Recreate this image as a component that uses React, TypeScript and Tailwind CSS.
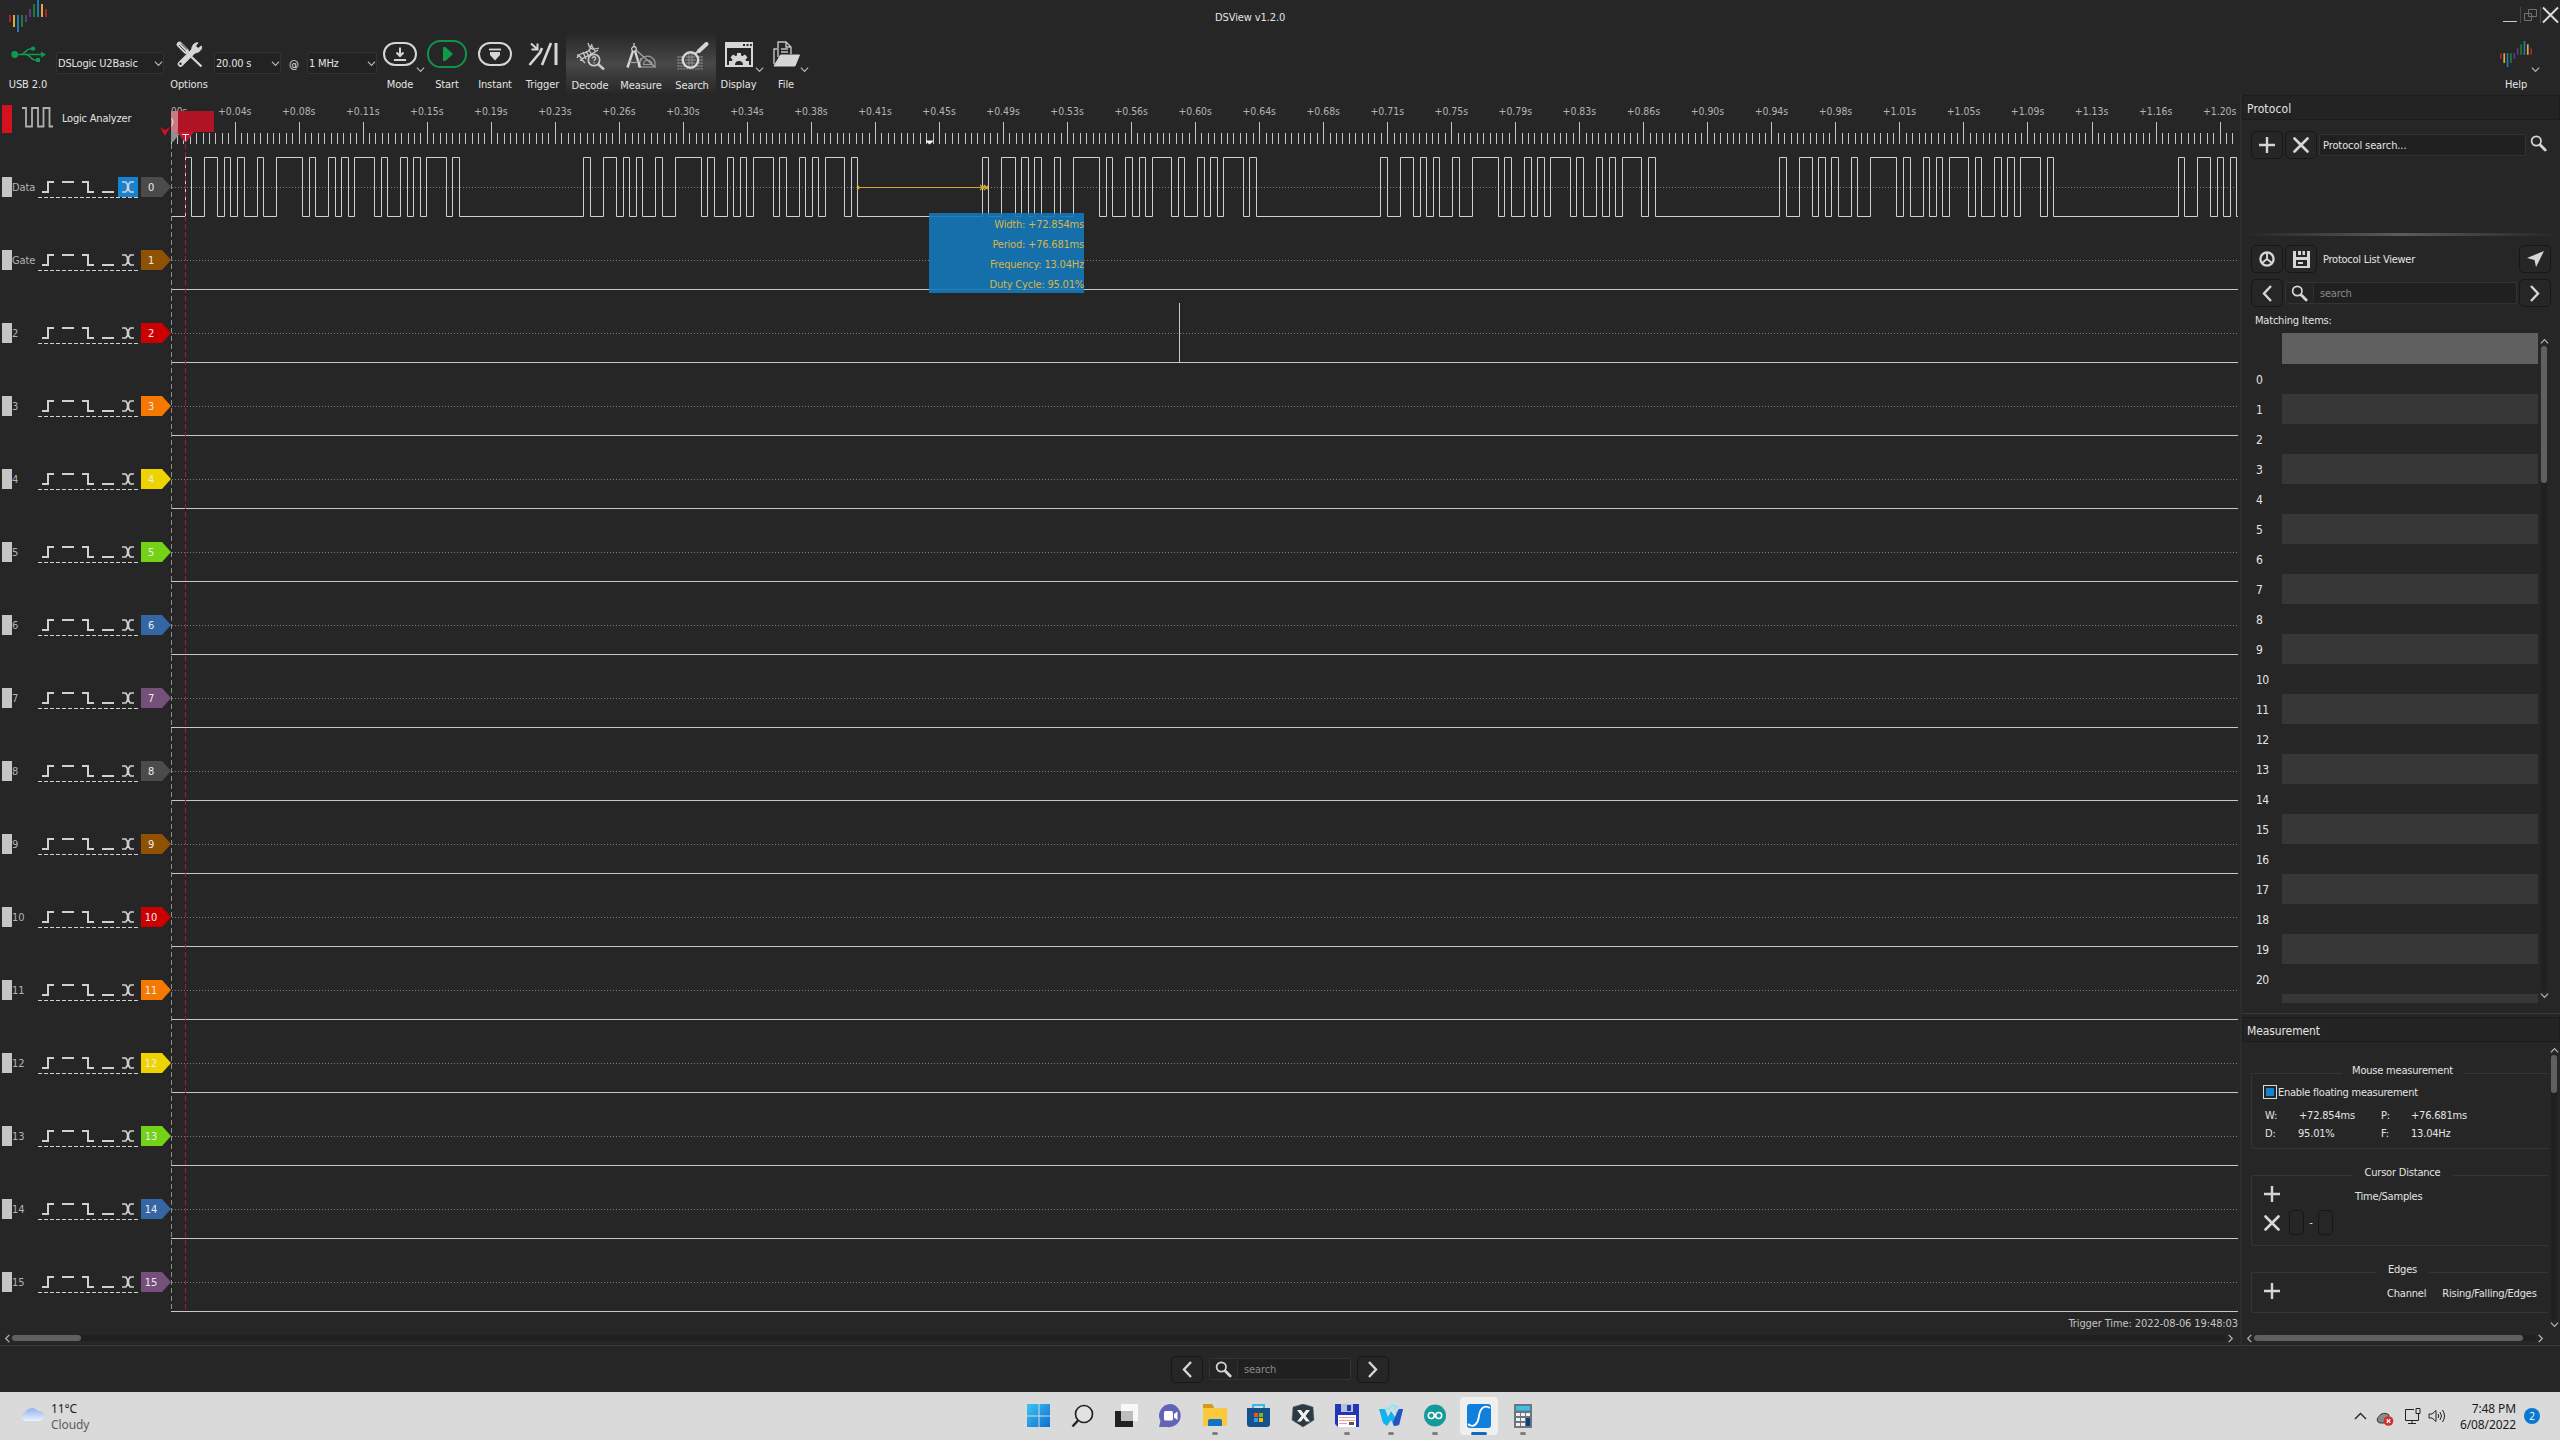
import React from "react";

const HIGH = 157.5;
const LOW = 216.5;
const EDGES = [0, 1, 3, 5, 6, 7, 8, 9, 11, 12, 14, 18, 19, 20, 22, 23, 24, 25, 26, 29, 30, 31, 33, 34, 35, 36, 37, 40, 41, 42];
const TAGS = ["#4b4b4b", "#8f5202", "#cc0000", "#f57900", "#edd400", "#73d216", "#3465a4", "#75507b"];

/* ---------- small drawings ---------- */

function Chevron({ dir, size = 9, color = "#b9b9b9", sw = 1.3 }: { dir: "up" | "down" | "left" | "right"; size?: number; color?: string; sw?: number }) {
  const d = { up: "M1 7 5 3 9 7", down: "M1 3 5 7 9 3", left: "M7 1 3 5 7 9", right: "M3 1 7 5 3 9" }[dir];
  return (
    <svg width={size} height={size} viewBox="0 0 10 10" fill="none" stroke={color} strokeWidth={sw} className="block shrink-0">
      <path d={d} />
    </svg>
  );
}

function BarsLogo({ w, h }: { w: number; h: number }) {
  const bars: [number, number, number, string][] = [
    [0, 15, 7, "#b0202a"], [4, 15, 12, "#dcaa3c"], [8, 15, 17, "#2277b8"], [12, 15, 12, "#1f7a35"], [16, 15, 7, "#5c3a80"],
    [20, 9, 8, "#5c3a80"], [24, 4, 13, "#1f7a35"], [28, 0, 17, "#2277b8"], [32, 4, 13, "#dcaa3c"], [36, 9, 8, "#b0202a"],
  ];
  return (
    <svg width={w} height={h} viewBox="0 0 38 32" preserveAspectRatio="none" className="block">
      {bars.map(([x, y, bh, c]) => (
        <rect key={x} x={x} y={y} width="2" height={bh} fill={c} />
      ))}
    </svg>
  );
}

function Magnifier({ size = 17 }: { size?: number }) {
  return (
    <svg width={size} height={size} viewBox="0 0 17 17" fill="none" stroke="#d6d6d6" className="block shrink-0">
      <circle cx="6.3" cy="6" r="4.7" strokeWidth="1.7" />
      <path d="M10 9.8 15.2 15" strokeWidth="2.8" strokeLinecap="round" />
    </svg>
  );
}

function Plus() {
  return (
    <svg width="16" height="16" viewBox="0 0 16 16" stroke="#d6d6d6" strokeWidth="2.4" className="block shrink-0">
      <path d="M8 0V16M0 8H16" />
    </svg>
  );
}

function Cross({ size = 16 }: { size?: number }) {
  return (
    <svg width={size} height={size} viewBox="0 0 16 16" stroke="#d6d6d6" strokeWidth="2.6" strokeLinecap="round" className="block shrink-0">
      <path d="M1.5 1.5 14.5 14.5M14.5 1.5 1.5 14.5" />
    </svg>
  );
}

function Arrow({ dir }: { dir: "left" | "right" }) {
  return (
    <svg width="12" height="17" viewBox="0 0 12 17" fill="none" stroke="#d6d6d6" strokeWidth="2.4" className="block">
      <path d={dir === "left" ? "M10 1 3 8.500 10 16" : "M2 1 9 8.500 2 16"} />
    </svg>
  );
}

const icons = {
  usb: (
    <svg width="35" height="17" viewBox="0 0 35 17" fill="none" stroke="#0f9a4e" strokeWidth="1.7">
      <path d="M4 8.500H31M10 8.500C15 8 14 3 19 3H21M15 8.500C20 9 19 14 24 14H26" />
      <circle cx="3.700" cy="8.500" r="3.400" fill="#0f9a4e" stroke="none" />
      <circle cx="22" cy="2.600" r="2.200" fill="#0f9a4e" stroke="none" />
      <rect x="25" y="12" width="4" height="4" fill="#0f9a4e" stroke="none" />
      <path d="M30 5.500 35 8.500 30 11.500Z" fill="#0f9a4e" stroke="none" />
    </svg>
  ),
  options: (
    <svg width="27" height="27" viewBox="0 0 27 27" fill="none" stroke="#d6d6d6">
      <path d="M3.500 3.500 10 10" strokeWidth="5.500" strokeLinecap="round" />
      <path d="M3 4 9.500 10.500M5 2.500 11 8.500" strokeWidth="0.9" stroke="#262626" />
      <path d="M15 15.500 25.500 25.500" strokeWidth="2.400" />
      <path d="M4.500 23 19 8.500" strokeWidth="5.500" strokeLinecap="round" />
      <path d="M16 10.500C15 6 17.500 1.500 22 1.800L19.500 5 22 7.500 25.500 5C26.500 9.500 21 13 17 11.500Z" fill="#d6d6d6" />
      <circle cx="4.500" cy="22.800" r="1.200" fill="#262626" stroke="none" />
    </svg>
  ),
  mode: (
    <svg width="34" height="24" viewBox="0 0 34 24" fill="none" stroke="#d6d6d6" strokeWidth="2">
      <rect x="1" y="1" width="32" height="22" rx="11" />
      <path d="M17 5.500V14M13.500 10.500 17 14 20.500 10.500M11 18H23" />
    </svg>
  ),
  start: (
    <svg width="40" height="28" viewBox="0 0 40 28" fill="none" stroke="#12934a" strokeWidth="2">
      <rect x="1" y="1" width="38" height="26" rx="12.500" />
      <path d="M16.500 7.500H18.500L25.500 14 18.500 20.500H16.500Z" fill="#0e9a48" stroke="#0e9a48" strokeWidth="1" />
    </svg>
  ),
  instant: (
    <svg width="34" height="24" viewBox="0 0 34 24" fill="none" stroke="#d6d6d6" strokeWidth="2">
      <rect x="1" y="1" width="32" height="22" rx="11" />
      <path d="M11 7.500H23" strokeWidth="1.800" />
      <path d="M12 10H22V13L17 18.500 12 13Z" fill="#d6d6d6" stroke="none" />
    </svg>
  ),
  trigger: (
    <svg width="30" height="24" viewBox="0 0 30 24" fill="none" stroke="#d6d6d6">
      <path d="M1.500 23 12 10.500 14 6M14 23 23 1" strokeWidth="2.600" />
      <path d="M28 1V23" strokeWidth="3" />
      <path d="M3 1.500 9 7M9.500 1.500V7.500H3.500" strokeWidth="2" />
    </svg>
  ),
  decode: (
    <svg width="29" height="28" viewBox="0 0 29 28" fill="none" stroke="#c8c8c8" strokeWidth="1.300">
      <path d="M1 16C5 7 12 16 16 2M4 18.500C9 14 14 14 22 8M12 1C14 8 17 8 23 6M1 13C5 13 6 19 9 21M7 10 10 17M10 9 13 15M13 8 16 13M16 4 19 9" />
      <circle cx="18" cy="18" r="5.700" strokeWidth="1.700" fill="#484848" />
      <path d="M22 22 28 27.500" strokeWidth="2.600" />
      <path d="M16.300 16.500C16.300 14 20 14.300 19.700 16.500 19.500 17.800 18 17.600 18 19M18 20.300V21.400" />
    </svg>
  ),
  measure: (
    <svg width="30" height="28" viewBox="0 0 30 28" fill="none" stroke="#a8a8a8" strokeWidth="1.200">
      <path d="M10 8 29 25H13" />
      <path d="M12 25 15 16M14 25A7.500 8 0 0 1 29 20V25M17.500 22.500A4 4 0 0 1 26 22.500Z" stroke="#9c9c9c" />
      <path d="M8 1V5" stroke="#d6d6d6" />
      <circle cx="8" cy="7" r="2.300" stroke="#d6d6d6" />
      <path d="M7 9 1.500 25.500M9 9 14 25.500" stroke="#d6d6d6" strokeWidth="2.400" />
      <path d="M3 19C6 21 10 21 13 19" />
    </svg>
  ),
  search: (
    <svg width="33" height="28" viewBox="0 0 33 28" fill="none">
      <path d="M1 15H27M1 18H27M1 21H27M1 24H27M3 14V27M6 14V27M9 14V27M22 14V27M25 14V27M1 27H27" stroke="#8b8b8b" strokeWidth="0.900" strokeDasharray="2 1" />
      <circle cx="14.500" cy="18" r="7.700" stroke="#d6d6d6" strokeWidth="2.400" fill="#4a4a4a" />
      <path d="M10 15H19M9 18H20M10 21H19M13 12V24M16 12V24" stroke="#9a9a9a" strokeWidth="0.900" />
      <path d="M19.500 11.500 23 8.500" stroke="#d6d6d6" strokeWidth="2" />
      <path d="M23 9 30.500 2" stroke="#d6d6d6" strokeWidth="4" strokeLinecap="round" />
    </svg>
  ),
  display: (
    <svg width="28" height="25" viewBox="0 0 28 25">
      <path d="M0 0H28V25H0ZM2 6V23H26V6Z" fill="#d6d6d6" fillRule="evenodd" />
      <path d="M18 2H20V4H18ZM21.500 2H23.500V4H21.500ZM25 2H26.800V4H25Z" fill="#262626" />
      <path d="M4 23V19H7L7.500 17.500 5.500 15.500 8 12.500 10.500 14 12 13.500V11H16V13.500L17.500 14 20 12.500 22.500 15.500 20.500 17.500 21 19H24V23H18A4 4 0 0 0 10 23Z" fill="#d6d6d6" />
    </svg>
  ),
  file: (
    <svg width="27" height="26" viewBox="0 0 27 26" fill="none" stroke="#c4c4c4" strokeWidth="1.400">
      <path d="M5 16V1H13L18 6V13M13 1V6H18M8 8H15M8 11H15M1 23V8H4" />
      <path d="M1 25 7.500 14H26.500L22 25Z" fill="#d6d6d6" stroke="#d6d6d6" strokeWidth="1" />
    </svg>
  ),
};

/* ---------- toolbar ---------- */

function Tool({ icon, label, width, menu, lit }: { icon: React.ReactNode; label: string; width: string; menu?: boolean; lit?: boolean }) {
  return (
    <div className={`relative flex shrink-0 flex-col items-center ${width} ${lit ? "pt-0.5" : ""}`}>
      <div className="flex h-11 items-center">{icon}</div>
      <div className="h-[18px] text-center leading-[18px]">{label}</div>
      {menu && (
        <div className="absolute top-[33px] left-[39px]">
          <Chevron dir="down" />
        </div>
      )}
    </div>
  );
}

function Combo({ text, width }: { text: string; width: string }) {
  return (
    <div className={`mt-5 flex h-[22px] shrink-0 items-center justify-between rounded-[2px] border border-[#333333] bg-[#222222] pl-px ${width}`}>
      <span className="pt-0.5 tracking-[-0.2px]">{text}</span>
      <Chevron dir="down" />
    </div>
  );
}

function Toolbar() {
  return (
    <div className="flex h-[63px] items-start">
      <Tool icon={icons.usb} label="USB 2.0" width="w-[56px]" />
      <Combo text="DSLogic U2Basic" width="w-[108px]" />
      <Tool icon={icons.options} label="Options" width="w-[50px]" />
      <Combo text="20.00 s" width="w-[67px]" />
      <div className="w-[26px] pt-[25px] text-center leading-4">@</div>
      <Combo text="1 MHz" width="w-[70px]" />
      <Tool icon={icons.mode} label="Mode" width="w-[46px]" menu />
      <Tool icon={icons.start} label="Start" width="w-[48px]" />
      <Tool icon={icons.instant} label="Instant" width="w-[48px]" />
      <Tool icon={icons.trigger} label="Trigger" width="w-[47px]" />
      <div className="flex h-[63px] bg-gradient-to-b from-[#262626] via-[#484848] to-[#262626]">
        <Tool icon={icons.decode} label="Decode" width="w-[48px]" lit />
        <Tool icon={icons.measure} label="Measure" width="w-[54px]" lit />
        <Tool icon={icons.search} label="Search" width="w-[48px]" lit />
      </div>
      <Tool icon={icons.display} label="Display" width="w-[45px]" menu />
      <Tool icon={icons.file} label="File" width="w-[50px]" menu />
      <div className="mr-5 ml-auto">
        <Tool icon={<BarsLogo w={32} h={26} />} label="Help" width="w-12" menu />
      </div>
    </div>
  );
}

function TitleBar() {
  return (
    <div className="flex h-8 items-start">
      <div className="w-[1215px] pl-[9px]">
        <BarsLogo w={38} h={32} />
      </div>
      <div className="mt-[10px] w-[70px] text-center leading-4 whitespace-nowrap">DSView v1.2.0</div>
      <svg width="60" height="24" viewBox="0 0 60 24" fill="none" className="ml-auto">
        <path d="M3 21.500H17" stroke="#c9c9c9" />
        <path d="M20.500 7V23M40.500 7V23" stroke="#484848" />
        <path d="M24.500 13.500H31.500V20.500H24.500ZM28.500 9.500H36.500V16.500H28.500Z" stroke="#707070" />
        <path d="M43 7.500 58 22.500M58 7.500 43 22.500" stroke="#dcdcdc" strokeWidth="2" />
      </svg>
    </div>
  );
}

/* ---------- channel list and wave view ---------- */

function Channel({ n }: { n: number }) {
  const name = n === 0 ? "Data" : n === 1 ? "Gate" : String(n);
  return (
    <div className="flex h-[73px] items-start pt-[26px] pl-[2px]">
      <div className="h-5 w-[10px] shrink-0 bg-[#c5c5c5]" />
      <div className="w-[26px] shrink-0 leading-[22px] text-[#b4b4b4]">{name}</div>
      <svg width="100" height="21" viewBox="0 0 100 21" fill="none" stroke="#d0d0d0" strokeWidth="2" className="shrink-0">
        {n === 0 && <rect x="80" y="0" width="20" height="20" fill="#1583d0" stroke="none" />}
        <path d="M4 15H10V5H16M24 5H36M44 5H50V15H56M64 15H76" />
        <path d="M84 5H88.500M91.500 5H96M84 15H88.500M91.500 15H96M88 5.500 89.500 7.500V12.500L88 14.500M92 5.500 90.500 7.500V12.500L92 14.500" strokeWidth="1.700" />
        <path d="M0 20.500H100" strokeWidth="1" strokeDasharray="4 2" />
      </svg>
      <div className="relative ml-[3px] h-5 w-[30px] shrink-0">
        <svg width="30" height="20" viewBox="0 0 30 20" className="absolute inset-0">
          <path d="M0 0H21L30 10 21 20H0Z" fill={TAGS[n % 8]} />
        </svg>
        <div className="relative w-[20px] text-center leading-[22px] text-[#ececec]">{n}</div>
      </div>
    </div>
  );
}

function wavePath() {
  let d = `M171 ${LOW}`;
  for (let b = 0; b < 6; b++) {
    for (let i = 0; i < EDGES.length; i++) {
      const x = Math.floor(185.3 + 398.55 * b + 6.525 * EDGES[i]) + 0.5;
      if (x > 2238) return d + "H2238";
      d += `H${x}V${i % 2 === 0 ? HIGH : LOW}`;
    }
  }
  return d;
}

function WaveView() {
  const majors = Array.from({ length: 33 }, (_, n) => n);
  let ticks = "";
  for (let i = 0; i <= 322; i++) {
    const x = Math.floor(171.1 + 6.403 * i) + 0.5;
    ticks += `M${x} ${i % 10 === 0 && i > 0 ? 122 : 133}V144`;
  }
  return (
    <div className="relative">
      <svg width="2069" height="1223" viewBox="171 96 2069 1223" fill="none" className="block">
        {majors.map((n) => (
          <text key={n} x={n === 0 ? 179 : 170.7 + 64.03 * n} y="115" textAnchor="middle" textLength={n === 0 ? 16 : 33.500} lengthAdjust="spacingAndGlyphs" fill="#b4b4b4" className="text-[11px] tracking-normal">
            {n === 0 ? "00s" : `+${(Math.round(3.75 * n) / 100).toFixed(2)}s`}
          </text>
        ))}
        <path d={ticks} stroke="#c5c5c5" />
        {Array.from({ length: 16 }, (_, n) => (
          <path key={n} d={`M172 ${187.5 + 73 * n}H2239`} stroke="#7c7c7c" strokeDasharray="1 2" />
        ))}
        {Array.from({ length: 15 }, (_, n) => (
          <path key={n} d={`M171 ${289.5 + 73 * n}H2238`} stroke="#c8c8c8" />
        ))}
        <path d="M1179.500 303V362" stroke="#c8c8c8" />
        <path d={wavePath()} stroke="#d0d0d0" />
        <path d="M171.500 144V1311" stroke="#8c8c8c" strokeDasharray="5 3" />
        <path d="M185.500 144V1311" stroke="#a81c2c" strokeDasharray="5 3" />
        <rect x="171" y="111" width="43" height="21" fill="#af1324" />
        <rect x="171" y="111" width="7" height="21" fill="#c77a82" />
        <path d="M171 132H181L173 142H171Z" fill="#8f8f8f" />
        <path d="M177 132H194L185.500 143Z" fill="#c11a2e" />
        <path d="M182 134.500H189M185.500 134V141" stroke="#f0f0f0" />
        <path d="M171 118C173.500 119 173.500 125 171 126" stroke="#f0f0f0" />
        <path d="M926 140.500H933V141.500L929.500 144.500 926 141.500Z" fill="#f2f2f2" />
        <path d="M857 187.500H988" stroke="#d4a536" />
        <path d="M857 185l2.500 2.500-2.500 2.500M980 185l5 5M985 185l-5 5M984.500 185l4 5M988.500 185l-4 5" stroke="#d4a536" strokeWidth="1.200" />
      </svg>
      <div className="absolute top-[117px] left-[758px] h-20 w-[155px] bg-[#1478ba]/90 pt-[2px] text-right leading-5 tracking-[-0.2px] text-[#d8b548]">
        <div className="h-5">Width: +72.854ms</div>
        <div className="h-5">Period: +76.681ms</div>
        <div className="h-5">Frequency: 13.04Hz</div>
        <div className="h-5">Duty Cycle: 95.01%</div>
      </div>
    </div>
  );
}

function LogicPane() {
  return (
    <div className="flex w-[2240px] shrink-0 flex-col">
      <div className="flex h-[1224px] pt-px">
        <div className="w-[171px] shrink-0">
          <div className="flex h-[55px] items-start pt-[9px] pl-[2px]">
            <div className="h-7 w-[10px] bg-[#d3111f]" />
            <svg width="32" height="21" viewBox="0 0 32 21" fill="none" stroke="#b0b0b0" strokeWidth="1.800" className="mt-[2px] ml-[10px]">
              <path d="M0 1H4V19.500H10V1H16V19.500H21.500V1H27.500V19.500H31" />
            </svg>
            <span className="mt-[6px] ml-2 leading-4 tracking-[-0.2px] whitespace-nowrap">Logic Analyzer</span>
            <svg width="10" height="9" viewBox="0 0 10 9" className="mt-[22px] mr-[1px] ml-auto">
              <path d="M0 0 5 3 10 0 5 9Z" fill="#d3111f" />
            </svg>
          </div>
          {Array.from({ length: 16 }, (_, n) => (
            <Channel key={n} n={n} />
          ))}
        </div>
        <WaveView />
      </div>
      <div className="h-3 pr-[2px] text-right leading-[9px] text-[#c4c4c4]">Trigger Time: 2022-08-06 19:48:03</div>
      <div className="flex h-[14px] items-center pr-[5px] pl-[3px]">
        <Chevron dir="left" />
        <div className="h-[6px] grow bg-[#202020]">
          <div className="h-[6px] w-[69px] rounded-full bg-[#606060]" />
        </div>
        <Chevron dir="right" />
      </div>
    </div>
  );
}

/* ---------- right dock ---------- */

function IconButton({ children, className = "h-7" }: { children: React.ReactNode; className?: string }) {
  return <div className={`flex w-8 shrink-0 items-center justify-center rounded-[5px] border border-[#171717] ${className}`}>{children}</div>;
}

function SearchField({ width, icon }: { width: string; icon: string }) {
  return (
    <div className={`flex h-[22px] shrink-0 items-center rounded-[2px] border border-[#333333] bg-[#202020] ${width}`}>
      <div className={`flex h-5 items-center justify-center rounded-[3px] border-r border-[#303030] bg-[#242424] ${icon}`}>
        <Magnifier />
      </div>
      <span className="pt-0.5 pl-[6px] text-[#8a8a8a]">search</span>
    </div>
  );
}

function Group({ title, gap, height, children }: { title: string; gap: string; height: string; children: React.ReactNode }) {
  return (
    <div className={`relative w-[297px] rounded-l-[2px] border border-r-0 border-[#353535] ${height}`}>
      <div className="absolute inset-x-0 -top-[11px] flex justify-center pl-[5px]">
        <div className={`bg-[#262626] text-center leading-4 ${gap}`}>{title}</div>
      </div>
      {children}
    </div>
  );
}

function Dock() {
  return (
    <div className="w-[318px] shrink-0 tracking-[-0.2px]">
      <div className="flex h-[25px] items-center border border-[#1c1c1c] bg-[#232323] pt-0.5 pl-1 text-[12px] tracking-[0.1px]">Protocol</div>
      <div className="mt-[11px] flex h-7 items-center pl-[9px]">
        <IconButton><Plus /></IconButton>
        <div className="w-[2px]" />
        <IconButton><Cross /></IconButton>
        <div className="ml-[2px] flex h-[22px] w-[207px] items-center rounded-[2px] border border-[#333333] bg-[#202020] pt-0.5 pl-[3px] tracking-[-0.1px]">Protocol search...</div>
        <div className="mb-1 ml-[4px]"><Magnifier /></div>
      </div>
      <div className="mt-[74px] h-[3px] bg-gradient-to-r from-[#262626] via-[#5c5c5c] to-[#262626]" />
      <div className="mt-[9px] flex h-7 items-center pl-[9px]">
        <IconButton>
          <svg width="16" height="16" viewBox="0 0 16 16" fill="none" stroke="#d6d6d6" strokeWidth="2.300">
            <circle cx="8" cy="8" r="6.600" />
            <path d="M8 1V8M8 8 3 12M8 8 13 12" strokeWidth="1.900" />
          </svg>
        </IconButton>
        <div className="w-[2px]" />
        <IconButton>
          <svg width="17" height="17" viewBox="0 0 17 17">
            <path d="M0 0H3V6H14V0H17V17H0ZM5 0H8V4H5ZM9.500 0H12V4H9.500Z" fill="#d6d6d6" />
            <path d="M3 9H14V15H3ZM5 11V13H10V11Z" fill="#262626" fillRule="evenodd" />
          </svg>
        </IconButton>
        <span className="ml-[6px] pt-0.5 tracking-[-0.25px]">Protocol List Viewer</span>
        <div className="mr-[9px] ml-auto">
          <IconButton>
            <svg width="17" height="16" viewBox="0 0 17 16">
              <path d="M17 0 9 16 7.500 9 0 7Z" fill="#d6d6d6" />
            </svg>
          </IconButton>
        </div>
      </div>
      <div className="mt-[6px] flex h-7 items-center pl-[9px]">
        <IconButton><Arrow dir="left" /></IconButton>
        <div className="w-[2px]" />
        <SearchField width="w-[232px]" icon="w-7" />
        <div className="w-[2px]" />
        <IconButton><Arrow dir="right" /></IconButton>
      </div>
      <div className="mt-[6px] pl-[13px] leading-4">Matching Items:</div>
      <div className="mt-[4px] flex h-[670px] overflow-hidden">
        <div className="w-[296px] shrink-0">
          <div className="ml-10 h-[31px] bg-[#606060]" />
          {Array.from({ length: 22 }, (_, n) => (
            <div key={n} className="flex h-[30px] items-center">
              <div className="w-10 pt-0.5 pl-[14px] text-[12px] tracking-[-0.5px]">{n < 21 ? n : ""}</div>
              <div className={`h-[30px] grow ${n % 2 ? "bg-[#373737]" : ""}`} />
            </div>
          ))}
        </div>
        <div className="flex w-[12px] flex-col items-center pt-[4px] pb-[3px]">
          <Chevron dir="up" />
          <div className="w-[6px] grow bg-[#202020]">
            <div className="h-[137px] w-[6px] rounded-full bg-[#606060]" />
          </div>
          <Chevron dir="down" />
        </div>
      </div>
      <div className="mt-[10px] h-[2px] border-t border-[#3a3a3a]" />
      <div className="mt-[2px] flex h-[25px] items-center border border-[#1c1c1c] bg-[#232323] pt-0.5 pl-1 text-[12px] tracking-[-0.1px]">Measurement</div>
      <div className="flex h-[289px]">
        <div className="w-[306px] pt-[31px] pl-[9px]">
          <Group title="Mouse measurement" gap="w-[121px]" height="h-[76px]">
            <div className="flex items-start pt-[11px] pl-[11px]">
              <div className="mr-px h-[14px] w-[14px] border border-[#dcdcdc] p-[2px]">
                <div className="h-full w-full bg-[#1583d0]" />
              </div>
              <span className="leading-[16px] tracking-[-0.25px]">Enable floating measurement</span>
            </div>
            <div className="mt-[7px] grid grid-cols-[34px_82px_30px_1fr] gap-y-[2px] pl-[13px] leading-4">
              <span>W:</span><span>+72.854ms</span><span>P:</span><span>+76.681ms</span>
              <span>D:</span><span className="-ml-px">95.01%</span><span>F:</span><span>13.04Hz</span>
            </div>
          </Group>
          <Group title="Cursor Distance" gap="w-[100px]" height="mt-[26px] h-[71px]">
            <div className="flex items-start pt-[10px] pl-[12px]">
              <Plus />
              <span className="mt-[3px] ml-[75px] leading-4">Time/Samples</span>
            </div>
            <div className="mt-[5px] flex items-center pl-[12px]">
              <Cross />
              <div className="ml-[9px] h-[25px] w-[15px] rounded-[4px] border border-[#171717]" />
              <span className="w-[14px] pt-0.5 text-center">-</span>
              <div className="h-[25px] w-[15px] rounded-[4px] border border-[#171717]" />
            </div>
          </Group>
          <Group title="Edges" gap="w-[53px]" height="mt-[26px] h-[41px]">
            <div className="flex items-start pt-[10px] pl-[12px] whitespace-nowrap">
              <Plus />
              <span className="mt-[3px] ml-[107px] leading-4">Channel</span>
              <span className="mt-[3px] ml-4 leading-4">Rising/Falling/Edges</span>
            </div>
          </Group>
        </div>
        <div className="flex w-[12px] flex-col items-center pt-[4px] pb-[2px]">
          <Chevron dir="up" />
          <div className="w-[6px] grow bg-[#202020]">
            <div className="h-[38px] w-[6px] rounded-full bg-[#606060]" />
          </div>
          <Chevron dir="down" />
        </div>
      </div>
      <div className="flex h-[14px] items-center pr-[15px] pl-[3px]">
        <Chevron dir="left" />
        <div className="h-[6px] grow bg-[#202020]">
          <div className="h-[6px] w-[269px] rounded-full bg-[#606060]" />
        </div>
        <Chevron dir="right" />
      </div>
    </div>
  );
}

/* ---------- bottom ---------- */

const apps: { art: React.ReactNode; dot?: boolean; active?: boolean }[] = [
  { art: <><defs><linearGradient id="win" x1="0" y1="0" x2="1" y2="1"><stop offset="0" stopColor="#3fc4f3" /><stop offset="1" stopColor="#0a6fd0" /></linearGradient></defs><path d="M0 0H11.500V11.500H0ZM12.500 0H23V11.500H12.500ZM0 12.500H11.500V23H0ZM12.500 12.500H23V23H12.500Z" fill="url(#win)" /></> },
  { art: <><circle cx="13" cy="10" r="8.500" fill="#e2e2e2" stroke="#222" strokeWidth="1.700" /><path d="M7 16.500 1.500 22.500" stroke="#222" strokeWidth="2.400" /></> },
  { art: <><path d="M0 7H18V23H0Z" fill="#222" /><path d="M6 0H23V17H6Z" fill="#f8f8f8" /><path d="M6 7H18V17H6Z" fill="#bdbdbd" /></> },
  { art: <><path d="M12 0A11.500 11.500 0 1 1 8 23H0L1.500 17A11.500 11.500 0 0 1 12 0Z" fill="#6264b8" /><rect x="5" y="7" width="9" height="9.500" rx="1.500" fill="#fff" /><path d="M15 10 18.500 7.500V16L15 13.500Z" fill="#fff" /></> },
  { art: <><path d="M0 0H9L11 3V8H0Z" fill="#d79a18" /><path d="M0 4H24V22H0Z" fill="#fbc93c" /><path d="M5 22V17Q5 15 7 15H17Q19 15 19 17V22Z" fill="#1274c4" /></>, dot: true },
  { art: <><path d="M6 5V1H17V5" fill="none" stroke="#39b9ea" strokeWidth="2" /><path d="M0 4H23V20Q23 23 20 23H3Q0 23 0 20Z" fill="#17518c" /><path d="M7 9H11V13H7Z" fill="#f25022" /><path d="M12 9H16V13H12Z" fill="#7fba00" /><path d="M7 14H11V18H7Z" fill="#20a4ee" /><path d="M12 14H16V18H12Z" fill="#ffb900" /></> },
  { art: <><path d="M12 0 22 3 23 16 12 23 1 16 2 3Z" fill="#2b3a44" stroke="#5d6b74" strokeWidth="1" strokeDasharray="1.500 1" /><path d="M6 6H10L12.500 9.500 15 6H19L14.500 12 19 17.500H15L12.500 14 10 17.500H6L10.500 12Z" fill="#f2f2f2" /></> },
  { art: <><path d="M0 0H24V23H3L0 20Z" fill="#2137b5" /><path d="M6 0H18V8H6Z" fill="#b9bfd8" /><path d="M12 1H16V7H12Z" fill="#2137b5" /><path d="M3 11H21V23H3Z" fill="#fff" /><path d="M4 13.500H20M4 16.500H20M4 19.500H12" stroke="#e8a0a0" /><path d="M14 18H19V21H14Z" fill="#555" /></>, dot: true },
  { art: <><path d="M0 5H6L9 13 12 7 16 13 18 7 20 5H24L20 21 15 22 12 16 8 22 4 19Z" fill="#12b4f0" /><path d="M20 5H24L20 21 15 22 14 18Z" fill="#2a4fc0" /><path d="M6 4 10 5 13 1 18 3 14 6" stroke="#8fe6ee" strokeWidth="2" fill="none" /></>, dot: true },
  { art: <><circle cx="12" cy="11.500" r="11" fill="#159a9c" /><circle cx="8.300" cy="11.500" r="3" fill="none" stroke="#fff" strokeWidth="1.600" /><circle cx="15.700" cy="11.500" r="3" fill="none" stroke="#fff" strokeWidth="1.600" /></>, dot: true },
  { art: <><rect width="24" height="24" rx="3" fill="#1180dc" /><path d="M1 20C7 25 11 19 12 12S17 0 23 4" fill="none" stroke="#fff" strokeWidth="1.800" /></>, active: true },
  { art: <><rect x="3" width="18" height="24" fill="#6b7680" /><rect x="5" y="2" width="14" height="4.500" fill="#3cc0ea" /><path d="M5 9H9V12H5ZM10 9H14V12H10ZM15 9H19V12H15ZM5 14H9V17H5ZM10 14H14V17H10ZM5 19H9V22H5ZM10 19H14V22H10Z" fill="#eef0f2" /><path d="M15 14H19V22H15Z" fill="#0d3f7a" /></>, dot: true },
];

function Taskbar() {
  return (
    <div className="flex h-12 items-center bg-[#dadada] font-['Open_Sans','Noto_Sans',sans-serif] text-[12px] leading-4 [font-stretch:normal] tracking-[-0.1px] text-[#1c1c1c]">
      <div className="flex w-[1017px] items-center pl-5">
        <svg width="25" height="16" viewBox="0 0 25 16" className="-mt-1">
          <defs>
            <linearGradient id="cloud" x1="0" y1="0" x2="0" y2="1"><stop offset="0" stopColor="#8fb4ec" /><stop offset="1" stopColor="#eaf2fd" /></linearGradient>
          </defs>
          <path d="M5 15A4.500 4.500 0 0 1 5 6.500 7.500 7 0 0 1 18 5 5 5 0 0 1 20 15Z" fill="url(#cloud)" />
        </svg>
        <div className="ml-[6px] pt-px font-['Noto_Sans','Open_Sans',sans-serif]">
          <div>11°C</div>
          <div className="text-[#5c5c5c]">Cloudy</div>
        </div>
      </div>
      <div className="flex">
        {apps.map((a, i) => (
          <div key={i} className="flex h-12 w-11 flex-col items-center pt-[5px]">
            <div className={`flex h-[38px] w-[38px] flex-col items-center rounded-[4px] pt-[7px] ${a.active ? "bg-[#efefef]" : ""}`}>
              <svg width="24" height="24" viewBox="0 0 24 24" className="block shrink-0">{a.art}</svg>
              {a.dot && <div className="mt-1 h-[3px] w-[6px] shrink-0 rounded-full bg-[#808080]" />}
              {a.active && <div className="mt-1 h-[3px] w-4 shrink-0 rounded-full bg-[#0f6cbd]" />}
            </div>
          </div>
        ))}
      </div>
      <div className="mr-5 ml-auto flex items-center">
        <svg width="13" height="8" viewBox="0 0 13 8" fill="none" stroke="#222" strokeWidth="1.300"><path d="M1 7 6.500 1.500 12 7" /></svg>
        <svg width="18" height="15" viewBox="0 0 18 15" className="mt-1 ml-[9px]">
          <path d="M4 12A3.500 3.500 0 0 1 3 5.500 6 5 0 0 1 13 4L12 12Z" fill="#8a8a8a" stroke="#333" />
          <circle cx="12.500" cy="10" r="4.800" fill="#d42b2b" /><path d="M10.700 8.200 14.300 11.800M14.300 8.200 10.700 11.800" stroke="#fff" strokeWidth="1.300" />
        </svg>
        <svg width="17" height="16" viewBox="0 0 17 16" fill="none" stroke="#222" className="ml-[10px]">
          <path d="M10 1.500H1.500V12.500H14.500V7M8 12.500V15.500M4 15.500H12M12 .5H16V5.500H12ZM14.500 5.500V12" />
        </svg>
        <svg width="18" height="14" viewBox="0 0 18 14" fill="none" stroke="#222" className="ml-[7px]">
          <path d="M1 5V9H4L8 12.500V1.500L4 5ZM10 5Q11.500 7 10 9M12 3Q15 7 12 11M14.500 1Q18.500 7 14.500 13" />
        </svg>
        <div className="ml-[12px] w-[58px] pt-px text-right font-['Noto_Sans','Open_Sans',sans-serif] tracking-[-0.1px] whitespace-nowrap">
          <div>7:48 PM</div>
          <div>6/08/2022</div>
        </div>
        <div className="ml-[8px] flex h-4 w-4 items-center justify-center rounded-full bg-[#0a78d0] text-[10px] text-white">2</div>
      </div>
    </div>
  );
}

export default function App() {
  return (
    <div className="h-[1440px] w-[2560px] overflow-hidden bg-[#262626] font-['DejaVu_Sans_Condensed','DejaVu_Sans',sans-serif] text-[11px] [font-stretch:condensed] tracking-[-0.1px] text-[#e4e4e4]">
      <TitleBar />
      <Toolbar />
      <div className="flex h-[1250px]">
        <LogicPane />
        <div className="w-[2px] shrink-0 bg-[#2c2c2c]" />
        <Dock />
      </div>
      <div className="flex h-[47px] items-center border-t border-[#3a3a3a] pl-[1171px]">
        <IconButton className="h-[27px]"><Arrow dir="left" /></IconButton>
        <div className="w-[6px]" />
        <SearchField width="w-[142px]" icon="w-7" />
        <div className="w-[6px]" />
        <IconButton className="h-[27px]"><Arrow dir="right" /></IconButton>
      </div>
      <Taskbar />
    </div>
  );
}
